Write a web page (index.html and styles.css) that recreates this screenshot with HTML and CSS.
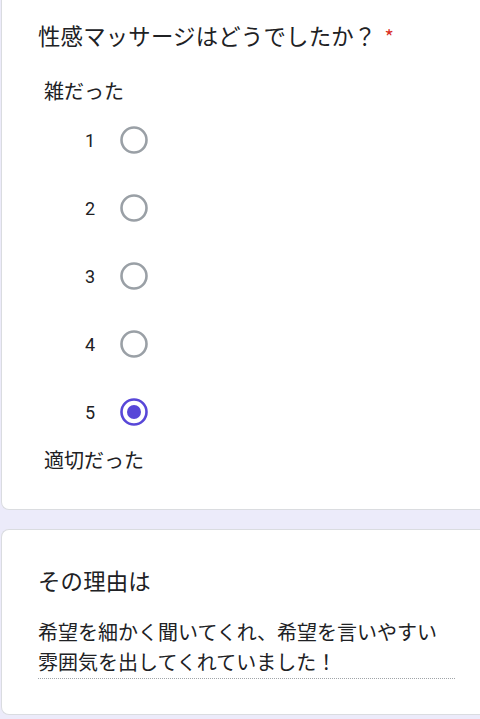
FILE: index.html
```html
<!DOCTYPE html>
<html lang="ja">
<head>
<meta charset="utf-8">
<link rel="stylesheet" href="styles.css">
</head>
<body>
<main class="form">
  <section class="card card-first">
    <h2 class="question">性感マッサージはどうでしたか？<span class="req">*</span></h2>
    <div class="scale-label">雑だった</div>
    <div class="scale">
      <div class="row"><span class="num">1</span><svg class="radio" viewBox="0 0 28 28"><circle cx="14" cy="14" r="12.5" fill="none" stroke="#9aa0a6" stroke-width="2.6"/></svg></div>
      <div class="row"><span class="num">2</span><svg class="radio" viewBox="0 0 28 28"><circle cx="14" cy="14" r="12.5" fill="none" stroke="#9aa0a6" stroke-width="2.6"/></svg></div>
      <div class="row"><span class="num">3</span><svg class="radio" viewBox="0 0 28 28"><circle cx="14" cy="14" r="12.5" fill="none" stroke="#9aa0a6" stroke-width="2.6"/></svg></div>
      <div class="row"><span class="num">4</span><svg class="radio" viewBox="0 0 28 28"><circle cx="14" cy="14" r="12.5" fill="none" stroke="#9aa0a6" stroke-width="2.6"/></svg></div>
      <div class="row"><span class="num">5</span><svg class="radio" viewBox="0 0 28 28"><circle cx="14" cy="14" r="12.5" fill="none" stroke="#5847d8" stroke-width="2.6"/><circle cx="14" cy="14" r="7" fill="#5847d8"/></svg></div>
    </div>
    <div class="scale-label scale-label-end">適切だった</div>
  </section>
  <section class="card card-second">
    <h2 class="question">その理由は</h2>
    <div class="answer">希望を細かく聞いてくれ、希望を言いやすい雰囲気を出してくれていました！</div>
  </section>
</main>
</body>
</html>
```

FILE: styles.css
```css
html, body {
  margin: 0;
  padding: 0;
}
body {
  background: #ecebfa;
  font-family: "Noto Sans CJK JP", "Noto Sans", sans-serif;
  color: #202124;
  width: 480px;
  height: 719px;
  overflow: hidden;
}
.form {
  display: flex;
  flex-direction: column;
  gap: 19px;
  padding-left: 1px;
}
.card {
  background: #fff;
  border: 1px solid #dadce0;
  border-right: none;
  border-radius: 8px 0 0 8px;
  padding-left: 36px;
  padding-right: 25px;
}
.card-first {
  border-top: none;
  border-top-left-radius: 0;
  padding-top: 19px;
  padding-bottom: 35px;
}
.card-second {
  padding-top: 34px;
  padding-bottom: 35px;
}
.question {
  margin: 0;
  font-size: 22.4px;
  font-weight: 400;
  line-height: 32px;
  letter-spacing: 0.2px;
}
.req {
  color: #d93025;
  font-size: 20px;
  margin-left: 8px;
}
.scale-label {
  font-size: 20px;
  line-height: 30px;
  padding-left: 6px;
  margin-top: 23px;
}
.scale-label-end {
  margin-top: 0;
  line-height: 28px;
}
.scale {
  display: flex;
  flex-direction: column;
}
.row {
  height: 68px;
  display: flex;
  align-items: center;
  padding-left: 47px;
}
.num {
  font-family: Roboto, "Noto Sans", sans-serif;
  font-size: 18px;
  width: 22px;
  margin-right: 13px;
  color: #202124;
}
.radio {
  width: 28px;
  height: 28px;
  display: block;
}
.answer {
  margin-top: 21px;
  font-size: 20px;
  line-height: 30px;
  border-bottom: 1.5px dotted #a0a4a8;
  padding-bottom: 1px;
}
```
